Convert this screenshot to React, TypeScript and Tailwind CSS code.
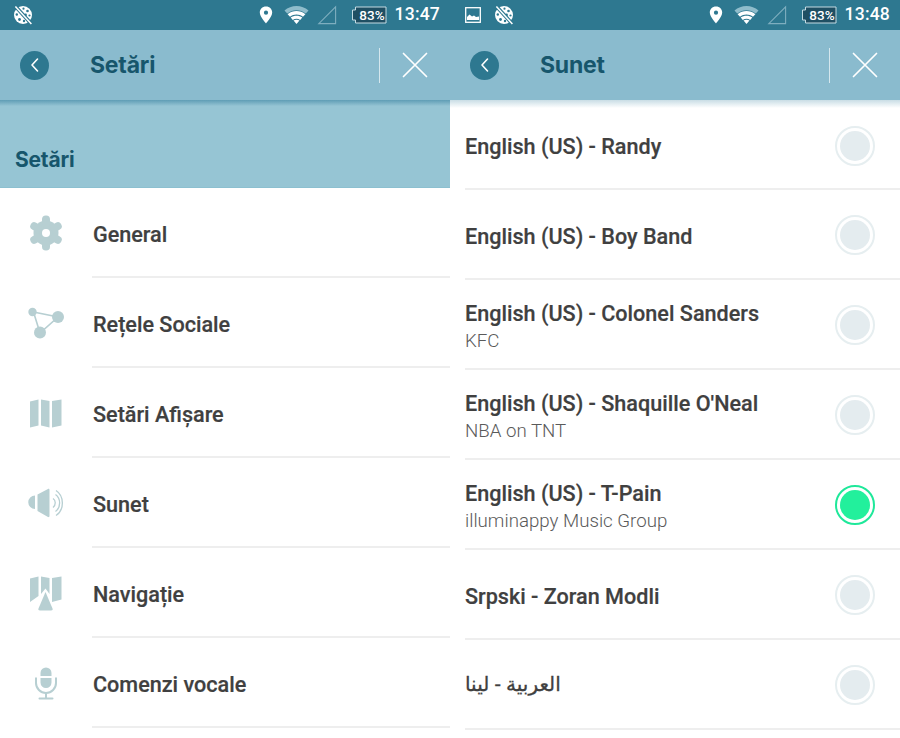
import React from "react";

const ICON = "#b7cfd2";

function GlobeOff() {
  return (
    <svg width="20" height="20" viewBox="0 0 20 20" className="block">
      <circle cx="10" cy="10" r="9" fill="#fff" />
      <g fill="#2e7890">
        <circle cx="6" cy="5" r="1.200" />
        <circle cx="10.500" cy="3.700" r="1.100" />
        <circle cx="14.500" cy="6" r="1.300" />
        <circle cx="3.800" cy="9.500" r="1.200" />
        <circle cx="12.500" cy="10" r="1.400" />
        <circle cx="16.500" cy="10.500" r="1.100" />
        <circle cx="6.500" cy="14.500" r="1.400" />
        <circle cx="11" cy="16" r="1.200" />
        <circle cx="14.500" cy="14" r="1.100" />
      </g>
      <path d="M3 2 18 18.500" stroke="#2e7890" strokeWidth="3.600" />
      <path d="M2.400 1.600 18.400 19" stroke="#fff" strokeWidth="1.500" />
    </svg>
  );
}

function PictureIcon() {
  return (
    <svg width="16" height="16" viewBox="0 0 16 16" className="block">
      <rect x="0.700" y="0.700" width="14.600" height="14.600" fill="none" stroke="#fff" strokeWidth="1.300" />
      <path d="M2 13v-3l2.500-2.500L7 9.500 9 8.500l2 1.500 3-.5V13z" fill="#fff" />
    </svg>
  );
}

function StatusRight({ time }: { time: string }) {
  return (
    <div className="ml-auto flex items-center h-full">
      <svg width="14" height="18" viewBox="0 0 14 18" className="block mr-[11px] mb-[1px]">
        <path
          fillRule="evenodd"
          d="M7 0.500C3.200 0.500 0.800 3.200 0.800 6.600 0.800 10.800 7 17.500 7 17.500s6.200-6.700 6.200-10.900C13.200 3.200 10.800 0.500 7 0.500zM7 4.600a2.100 2.100 0 1 1 0 4.200 2.100 2.100 0 0 1 0-4.200z"
          fill="#fff"
        />
      </svg>
      <svg width="25" height="20" viewBox="0 0 25 20" className="block mr-[8px]">
        <path d="M0.500 5.500C7 -0.500 18 -0.500 24.500 5.500L21.800 8.600C16.500 4 8.500 4 3.200 8.600z" fill="#8fbccb" />
        <path d="M3.600 9.200C8.700 4.800 16.300 4.800 21.400 9.200L19 11.800C15.200 8.700 9.800 8.700 6 11.800z" fill="#fff" />
        <path d="M6.700 12.600C9.900 10 15.100 10 18.300 12.600L16.200 15C14 13.300 11 13.300 8.800 15z" fill="#fff" />
        <path d="M9.500 15.600C11 14.600 14 14.600 15.500 15.600L12.500 19z" fill="#fff" />
      </svg>
      <svg width="20" height="20" viewBox="0 0 20 20" className="block mr-[14px]">
        <path d="M18.600 1.800V18.600H1.800z" fill="none" stroke="#7eaebf" strokeWidth="1.100" />
      </svg>
      <svg width="36" height="18" viewBox="0 0 36 18" className="block mr-[8px]">
        <path d="M4.500 1H35V17H4.500V14H1.500V4H4.500z" fill="#1f4f63" stroke="#c4dbe3" strokeWidth="1" />
        <text x="21" y="13.600" textAnchor="middle" fill="#fff" fontSize="13.500" fontFamily="Roboto, sans-serif" fontWeight="500">
          83%
        </text>
      </svg>
      <span className="text-white text-[17.5px] leading-none font-medium tracking-[0.2px] font-['Roboto',sans-serif] mr-[10px]">{time}</span>
    </div>
  );
}

function Header({ title, time, extra }: { title: string; time: string; extra?: boolean }) {
  return (
    <>
      <div className="h-[30px] bg-[#2e7890] flex items-center">
        {extra && (
          <div className="ml-[15px] mb-[1px]">
            <PictureIcon />
          </div>
        )}
        <div className="ml-[13px] mb-[1px]">
          <GlobeOff />
        </div>
        <StatusRight time={time} />
      </div>
      <div className="h-[70px] bg-[#8abbce] flex items-center">
        <div className="ml-5 w-[29px] h-[29px] rounded-full bg-[#2e7890] flex items-center justify-center">
          <svg width="12" height="16" viewBox="0 0 12 16">
            <path d="M8.500 2 3 8l5.500 6" fill="none" stroke="#fff" strokeWidth="1.600" strokeLinecap="round" strokeLinejoin="round" />
          </svg>
        </div>
        <div className="ml-[41px] text-[23px] font-bold text-[#17566c] font-['Inter',sans-serif] leading-none tracking-[-0.2px]">{title}</div>
        <div className="ml-auto w-px h-[35px] bg-[#d5e7ee]" />
        <svg width="26" height="26" viewBox="0 0 26 26" className="ml-[22px] mr-[22px] block">
          <path d="M1.500 1.500 24.500 24.500M24.500 1.500 1.500 24.500" stroke="#fff" strokeWidth="1.700" strokeLinecap="round" />
        </svg>
      </div>
    </>
  );
}

const Gear = () => (
  <svg width="32" height="36" viewBox="0 0 32 36">
    <circle cx="16" cy="18" r="12.500" fill={ICON} />
    {[0, 60, 120, 180, 240, 300].map((a) => (
      <rect key={a} x="12" y="0.500" width="8" height="12" rx="3.800" fill={ICON} transform={`rotate(${a} 16 18)`} />
    ))}
    <circle cx="16" cy="18" r="4" fill="#fff" />
  </svg>
);

const Share = () => (
  <svg width="38" height="32" viewBox="0 0 38 32">
    <path d="M6.500 5 31 10 13 26z" fill="none" stroke={ICON} strokeWidth="1.600" />
    <circle cx="5.500" cy="5" r="4.200" fill={ICON} />
    <circle cx="31" cy="10" r="6" fill={ICON} />
    <circle cx="13" cy="25.500" r="6" fill={ICON} />
  </svg>
);

const MapI = () => (
  <svg width="34" height="30" viewBox="0 0 34 30">
    <path fill={ICON} d="M1 3.500 9.500 1.500V27.500L1 29.500zM12 1.500 20.500 3V29.500L12 27.500zM23 3 32.500 1.500V27.500L23 29.500z" />
  </svg>
);

const Speaker = () => (
  <svg width="38" height="30" viewBox="0 0 38 30">
    <path fill={ICON} d="M8 7.500A6.500 6.500 0 0 0 8 21zM10.500 6.500 21 1c.8-.4 1.500 0 1.500 1V28c0 1-.7 1.400-1.500 1L10.500 23z" />
    <g fill="none" stroke={ICON} strokeWidth="1.300">
      <path d="M26 10.500c3 2 3 6.500 0 9" />
      <path d="M28.500 6.500c5.500 4 5.500 13 0 17" />
      <path d="M29 2.500c8.500 5.500 8.500 19.500 0 25" />
    </g>
  </svg>
);

const NavMap = () => (
  <svg width="34" height="36" viewBox="0 0 34 36">
    <path fill={ICON} d="M1 3.500 9.500 1.500V21L1 27zM12 1.500 20.500 3V19l-4-5.500L12 19zM23 3 32.500 1.500V24.500L23 27V22z" />
    <path fill={ICON} d="M16.500 17 23.500 33.500C24 34.800 23.500 35.500 22 35.500H11C9.500 35.500 9 34.800 9.500 33.500z" />
  </svg>
);

const Mic = () => (
  <svg width="24" height="34" viewBox="0 0 24 34">
    <path fill={ICON} d="M6.500 7a5.500 5.500 0 0 1 11 0V10h-11zM6.500 12h11v4.500a5.500 5.500 0 0 1-11 0z" />
    <path d="M2 11.500V17a10 10 0 0 0 20 0V11.500" fill="none" stroke={ICON} strokeWidth="2" />
    <path d="M12 27v5M5.500 32.500h13" stroke={ICON} strokeWidth="2" strokeLinecap="round" />
  </svg>
);

const menu: { label: string; icon: React.ReactNode }[] = [
  { label: "General", icon: <Gear /> },
  { label: "Rețele Sociale", icon: <Share /> },
  { label: "Setări Afișare", icon: <MapI /> },
  { label: "Sunet", icon: <Speaker /> },
  { label: "Navigație", icon: <NavMap /> },
  { label: "Comenzi vocale", icon: <Mic /> },
];

const voices: { t: string; s?: string; on?: boolean; ar?: boolean }[] = [
  { t: "English (US) - Randy" },
  { t: "English (US) - Boy Band" },
  { t: "English (US) - Colonel Sanders", s: "KFC" },
  { t: "English (US) - Shaquille O'Neal", s: "NBA on TNT" },
  { t: "English (US) - T-Pain", s: "illuminappy Music Group", on: true },
  { t: "Srpski - Zoran Modli" },
  { t: "العربية - لينا", ar: true },
];

function Radio({ on }: { on?: boolean }) {
  return (
    <div
      className={
        "w-10 h-10 rounded-full border-2 flex items-center justify-center " +
        (on ? "border-[#1fe89a]" : "border-[#e6eef0]")
      }
    >
      <div className={"w-[30px] h-[30px] rounded-full " + (on ? "bg-[#22f09c]" : "bg-[#e4ecef]")} />
    </div>
  );
}

export default function App() {
  return (
    <div className="w-[900px] h-[738px] overflow-hidden flex bg-white font-['Roboto',sans-serif] antialiased">
      <div className="w-[450px] shrink-0">
        <Header title="Setări" time="13:47" />
        <div className="h-[88px] bg-gradient-to-b from-[#5f9db5] from-0% via-[#96c5d4] via-[7%] to-[#96c5d4] border-b border-b-[#8cc0d0] flex items-end pb-[15px] pl-[15px]">
          <div className="text-[21px] font-bold leading-[24px] text-[#17566c] font-['Inter',sans-serif] tracking-[-0.2px]">Setări</div>
        </div>
        <div>
          {menu.map((m) => (
            <div key={m.label} className="h-[90px] flex">
              <div className="w-[92px] shrink-0 flex items-center justify-center">{m.icon}</div>
              <div className="flex-1 border-b-2 border-[#eeeeee] flex items-center pt-[6px] pl-[1px] text-[21.6px] font-medium text-[#404040] [-webkit-text-stroke:0.2px_#404040]">
                {m.label}
              </div>
            </div>
          ))}
        </div>
      </div>
      <div className="w-[450px] shrink-0">
        <Header title="Sunet" time="13:48" extra />
        <div className="h-[8px] -mb-[5px] bg-gradient-to-b from-[#c9dde5] to-white" />
        <div>
          {voices.map((v, i) => (
            <div key={i} className={"ml-[15px] flex items-center border-b-2 border-[#eeeeee] " + (i === 0 ? "h-[87px]" : "h-[90px] pt-[2px]")}>
              <div className={"flex-1 min-w-0 " + (v.ar ? "pb-[2px]" : i === 0 ? "pt-[2px]" : "pt-[3px]")}>
                {v.ar ? (
                  <div className="text-[20px] font-normal text-[#404040] leading-[26px] font-['Noto_Sans','DejaVu_Sans',sans-serif] [-webkit-text-stroke:0.3px_#404040]" dir="rtl" style={{ width: "fit-content" }}>
                    {v.t}
                  </div>
                ) : (
                  <div className="text-[21.6px] font-medium text-[#404040] leading-[26px] [-webkit-text-stroke:0.2px_#404040]">{v.t}</div>
                )}
                {v.s && <div className="text-[18.7px] font-light text-[#5a5a5a] leading-[24px] mt-[2px]">{v.s}</div>}
              </div>
              <div className="mr-[25px]">
                <Radio on={v.on} />
              </div>
            </div>
          ))}
        </div>
      </div>
    </div>
  );
}
